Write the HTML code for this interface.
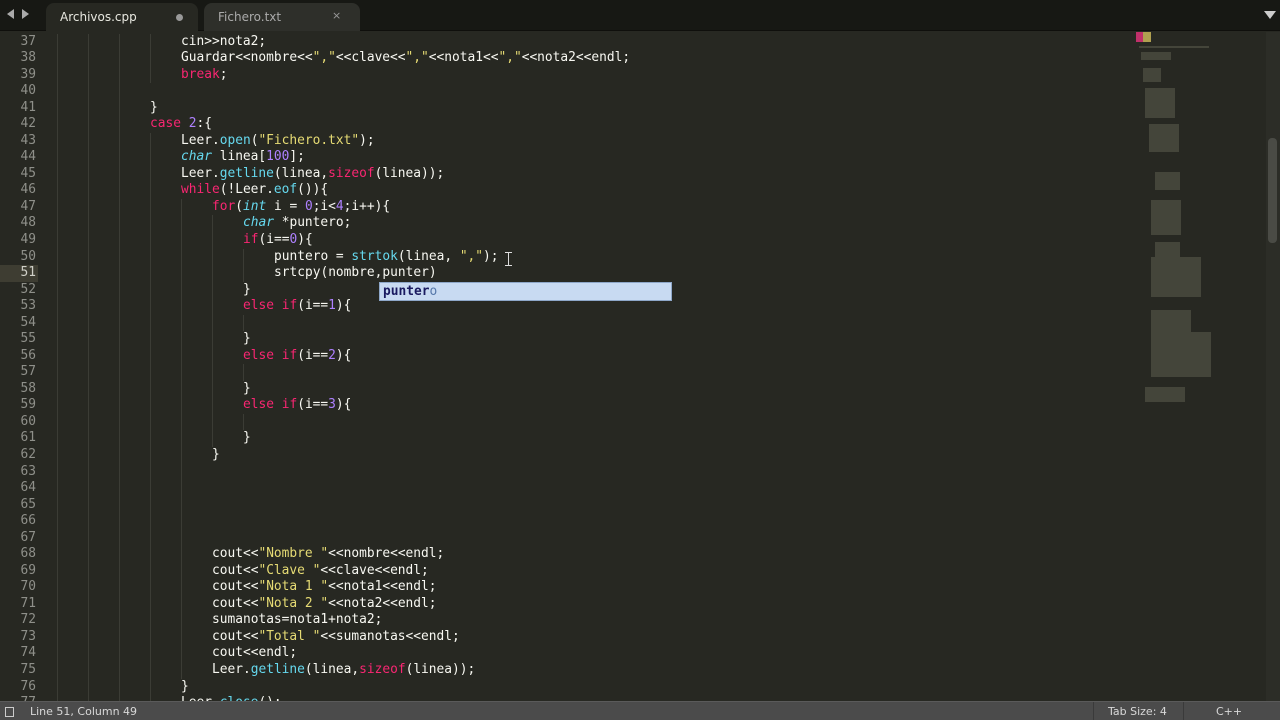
<!DOCTYPE html>
<html><head><meta charset="utf-8"><style>
*{margin:0;padding:0;box-sizing:border-box}
html,body{width:1280px;height:720px;overflow:hidden}
body{background:#272822;font-family:"DejaVu Sans Mono","Liberation Mono",monospace;position:relative}
#tabs{position:absolute;left:0;top:0;width:1280px;height:31px;background:#171814;border-bottom:1px solid #0f0f0c}
.tab{position:absolute;top:3px;height:28px;border-radius:8px 8px 0 0;font-family:"DejaVu Sans","Liberation Sans",sans-serif;font-size:12px;padding:7px 0 0 14px}
.t1{left:46px;width:152px;background:#272822;color:#e8e8e0}
.t2{left:204px;width:156px;background:#2e2f2a;color:#aaa}
.ln{position:absolute;left:0;width:38px;text-align:right;padding-right:2px;color:#8f908a;font-size:12.86px;height:16.54px;line-height:16.54px}
.cl{position:absolute;white-space:pre;color:#f8f8f2;font-size:12.86px;height:16.54px;line-height:16.54px}
.g{position:absolute;width:1px;background:#3b3c35}
.k{color:#f92672}.n{color:#ae81ff}.s{color:#e6db74}.f{color:#66d9ef}.t{color:#66d9ef;font-style:italic}
#status{position:absolute;left:0;top:701px;width:1280px;height:19px;background:#4b4b4b;border-top:1px solid #5a5a5a;color:#d8d8d8;font-family:"DejaVu Sans","Liberation Sans",sans-serif;font-size:11px;line-height:19px}
</style></head><body>
<div id="tabs">
<div style="position:absolute;left:7px;top:9px;width:0;height:0;border-top:5px solid transparent;border-bottom:5px solid transparent;border-right:7px solid #aaa"></div>
<div style="position:absolute;left:22px;top:9px;width:0;height:0;border-top:5px solid transparent;border-bottom:5px solid transparent;border-left:7px solid #aaa"></div>
<div class="tab t1">Archivos.cpp<span style="position:absolute;left:130px;top:11px;width:7px;height:7px;border-radius:50%;background:#999"></span></div>
<div class="tab t2">Fichero.txt<span style="position:absolute;left:128px;top:6px;color:#999;font-size:11px">×</span></div>
<div style="position:absolute;left:1264px;top:11px;width:0;height:0;border-left:6px solid transparent;border-right:6px solid transparent;border-top:8px solid #ccc"></div>
</div>
<div style="position:absolute;left:0;top:265px;width:38px;height:16.5px;background:#3e3d32"></div>
<div id="code" style="position:absolute;left:0;top:0;width:1280px;height:701px;overflow:hidden"></div>
<div style="position:absolute;left:379px;top:282px;width:293px;height:19px;background:#c8daf2;border:1px solid #8ea7c9;font-size:12.86px;line-height:17px;padding-left:3px;white-space:pre"><b style="color:#1a1a60">punter</b><span style="color:#5577aa">o</span></div>
<div style="position:absolute;left:508px;top:252px;width:1px;height:14px;background:#ddd"></div>
<div style="position:absolute;left:505px;top:252px;width:7px;height:1px;background:#ddd"></div>
<div style="position:absolute;left:505px;top:265px;width:7px;height:1px;background:#ddd"></div>
<div style="position:absolute;left:1266px;top:32px;width:14px;height:669px;background:#2c2d27"></div>
<div style="position:absolute;left:1268px;top:138px;width:9px;height:105px;background:#4a4b45;border-radius:4px"></div>
<svg style="position:absolute;left:1135px;top:32px" width="90" height="385">
<rect x="1" y="0" width="7" height="10" fill="#c0306a"/><rect x="8" y="0" width="8" height="10" fill="#b0a050"/>
<g fill="#44453a">
<rect x="4" y="14" width="70" height="2"/><rect x="6" y="20" width="30" height="8"/><rect x="8" y="36" width="18" height="14"/><rect x="10" y="56" width="30" height="30"/><rect x="14" y="92" width="30" height="28"/><rect x="20" y="140" width="25" height="18"/><rect x="16" y="168" width="30" height="35"/><rect x="20" y="210" width="25" height="20"/><rect x="16" y="225" width="50" height="40"/><rect x="16" y="278" width="40" height="50"/><rect x="16" y="300" width="60" height="45"/><rect x="10" y="355" width="40" height="15"/>
</g></svg>
<div id="status"><span style="position:absolute;left:5px;top:5px;width:9px;height:10px;border:1px solid #ccc"></span><span style="position:absolute;left:30px">Line 51, Column 49</span><span style="position:absolute;left:1093px;top:0;width:1px;height:19px;background:#3a3a3a"></span><span style="position:absolute;left:1108px">Tab Size: 4</span><span style="position:absolute;left:1183px;top:0;width:1px;height:19px;background:#3a3a3a"></span><span style="position:absolute;left:1216px">C++</span></div>
<script>
var L={37:[4,'cin&gt;&gt;nota2;'],38:[4,'Guardar&lt;&lt;nombre&lt;&lt;<span class=s>","</span>&lt;&lt;clave&lt;&lt;<span class=s>","</span>&lt;&lt;nota1&lt;&lt;<span class=s>","</span>&lt;&lt;nota2&lt;&lt;endl;'],39:[4,'<span class=k>break</span>;'],40:[3,''],41:[3,'}'],42:[3,'<span class=k>case</span> <span class=n>2</span>:{'],
43:[4,'Leer.<span class=f>open</span>(<span class=s>"Fichero.txt"</span>);'],44:[4,'<span class=t>char</span> linea[<span class=n>100</span>];'],45:[4,'Leer.<span class=f>getline</span>(linea,<span class=k>sizeof</span>(linea));'],46:[4,'<span class=k>while</span>(!Leer.<span class=f>eof</span>()){'],
47:[5,'<span class=k>for</span>(<span class=t>int</span> i = <span class=n>0</span>;i&lt;<span class=n>4</span>;i++){'],48:[6,'<span class=t>char</span> *puntero;'],49:[6,'<span class=k>if</span>(i==<span class=n>0</span>){'],50:[7,'puntero = <span class=f>strtok</span>(linea, <span class=s>","</span>);'],51:[7,'srtcpy(nombre,punter)'],52:[6,'}'],
53:[6,'<span class=k>else if</span>(i==<span class=n>1</span>){'],54:[7,''],55:[6,'}'],56:[6,'<span class=k>else if</span>(i==<span class=n>2</span>){'],57:[7,''],58:[6,'}'],59:[6,'<span class=k>else if</span>(i==<span class=n>3</span>){'],60:[7,''],61:[6,'}'],62:[5,'}'],63:[5,''],64:[5,''],65:[5,''],66:[5,''],67:[5,''],
68:[5,'cout&lt;&lt;<span class=s>"Nombre "</span>&lt;&lt;nombre&lt;&lt;endl;'],69:[5,'cout&lt;&lt;<span class=s>"Clave "</span>&lt;&lt;clave&lt;&lt;endl;'],70:[5,'cout&lt;&lt;<span class=s>"Nota 1 "</span>&lt;&lt;nota1&lt;&lt;endl;'],71:[5,'cout&lt;&lt;<span class=s>"Nota 2 "</span>&lt;&lt;nota2&lt;&lt;endl;'],72:[5,'sumanotas=nota1+nota2;'],73:[5,'cout&lt;&lt;<span class=s>"Total "</span>&lt;&lt;sumanotas&lt;&lt;endl;'],74:[5,'cout&lt;&lt;endl;'],75:[5,'Leer.<span class=f>getline</span>(linea,<span class=k>sizeof</span>(linea));'],76:[4,'}'],77:[4,'Leer.<span class=f>close</span>();']};
var h='';for(var n=37;n<=77;n++){var y=33.5+(n-37)*16.54;var d=L[n];
h+='<div class=ln style="top:'+y+'px'+(n==51?';color:#d0d0c8':'')+'">'+n+'</div>';
for(var k=0;k<d[0];k++)h+='<div class=g style="left:'+(57+31*k)+'px;top:'+y+'px;height:16.54px"></div>';
h+='<div class=cl style="left:'+(57+31*d[0])+'px;top:'+y+'px">'+d[1]+'</div>';}
document.getElementById('code').innerHTML=h;
</script>
</body></html>
